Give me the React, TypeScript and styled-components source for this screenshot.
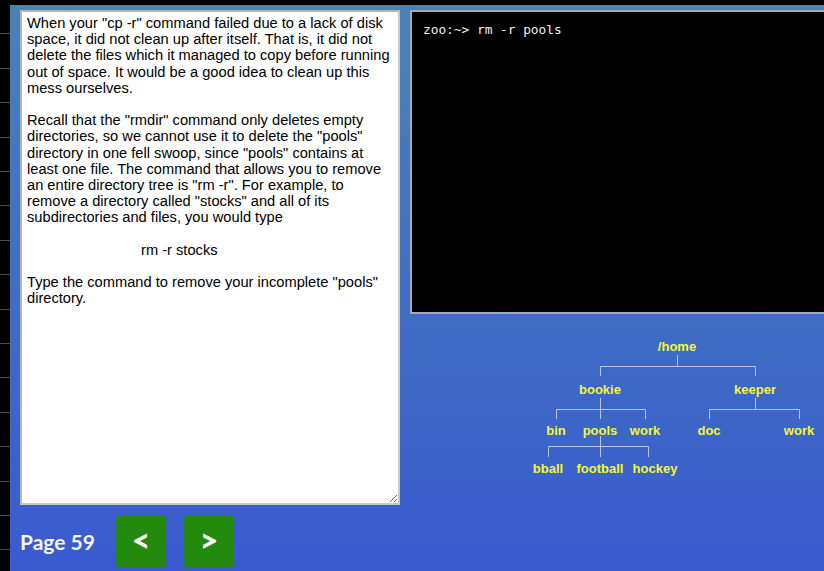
import React from "react";
import styled, { createGlobalStyle } from "styled-components";

const GlobalStyle = createGlobalStyle`
  html, body {
    margin: 0;
    padding: 0;
    background: #000;
    overflow: hidden;
  }
`;

const lessonText =
  'When your "cp -r" command failed due to a lack of disk space, it did not clean up after itself. That is, it did not delete the files which it managed to copy before running out of space. It would be a good idea to clean up this mess ourselves.\n\n' +
  'Recall that the "rmdir" command only deletes empty directories, so we cannot use it to delete the "pools" directory in one fell swoop, since "pools" contains at least one file. The command that allows you to remove an entire directory tree is "rm -r". For example, to remove a directory called "stocks" and all of its subdirectories and files, you would type\n\n' +
  " ".repeat(28) +
  "rm -r stocks\n\n" +
  'Type the command to remove your incomplete "pools" directory.';

type Node = { label: string; x: number; y: number };
type Branch = { from: [number, number]; bar: number; kids: number[]; drop: number };

// tree coords are relative to the diagram's own box
const nodes: Node[] = [
  { label: "/home", x: 267, y: 16 },
  { label: "bookie", x: 190, y: 59 },
  { label: "keeper", x: 345, y: 59 },
  { label: "bin", x: 146, y: 100 },
  { label: "pools", x: 190, y: 100 },
  { label: "work", x: 235, y: 100 },
  { label: "doc", x: 299, y: 100 },
  { label: "work", x: 389, y: 100 },
  { label: "bball", x: 138, y: 138 },
  { label: "football", x: 190, y: 138 },
  { label: "hockey", x: 245, y: 138 },
];

const branches: Branch[] = [
  { from: [267, 27], bar: 38, kids: [190, 345], drop: 48 },
  { from: [190, 70], bar: 81, kids: [146, 190, 235], drop: 91 },
  { from: [345, 70], bar: 81, kids: [299, 389], drop: 91 },
  { from: [190, 108], bar: 118, kids: [138, 190, 238], drop: 129 },
];

export default function App() {
  return (
    <>
      <GlobalStyle />
      <Page>
        <Sidebar />
        <Main>
          <Panel>
            <Workspace>
              <Lesson readOnly value={lessonText} />
              <RightColumn>
                <Terminal>zoo:~&gt; rm -r pools</Terminal>
                <Tree width="414" height="150" viewBox="0 0 414 150">
                  {branches.map((b, i) => (
                    <g key={i} stroke="#b9c3e3" strokeWidth="1" fill="none">
                      <line x1={b.from[0] + 0.5} y1={b.from[1]} x2={b.from[0] + 0.5} y2={b.bar + 0.5} />
                      <line
                        x1={Math.min(...b.kids) + 0.5}
                        y1={b.bar + 0.5}
                        x2={Math.max(...b.kids) + 0.5}
                        y2={b.bar + 0.5}
                      />
                      {b.kids.map((k) => (
                        <line key={k} x1={k + 0.5} y1={b.bar + 0.5} x2={k + 0.5} y2={b.drop} />
                      ))}
                    </g>
                  ))}
                  {nodes.map((n, i) => (
                    <TreeLabel key={i} x={n.x} y={n.y + 7} textAnchor="middle">
                      {n.label}
                    </TreeLabel>
                  ))}
                </Tree>
              </RightColumn>
            </Workspace>
            <Footer>
              <PageLabel>Page 59</PageLabel>
              <NavButton>&lt;</NavButton>
              <NavButton>&gt;</NavButton>
            </Footer>
          </Panel>
        </Main>
      </Page>
    </>
  );
}

const Page = styled.div`
  display: flex;
  min-height: 100vh;
  background: #000;
`;

const Sidebar = styled.div`
  width: 10px;
  flex: none;
  background: repeating-linear-gradient(
    to bottom,
    #000 0px,
    #000 33.4px,
    #4d4d4d 33.4px,
    #4d4d4d 34.4px
  );
`;

const Main = styled.div`
  flex: 1;
  padding-top: 5px;
  display: flex;
`;

const Panel = styled.div`
  flex: 1;
  min-width: 900px;
  padding: 5px 10px;
  background: linear-gradient(to bottom, #4a82b7 0%, #3e6dc3 55%, #3a5ad0 100%);
`;

const Workspace = styled.div`
  display: flex;
  gap: 10px;
  align-items: flex-start;
`;

const Lesson = styled.textarea`
  box-sizing: border-box;
  width: 380px;
  height: 495px;
  margin: 0;
  padding: 3px 5px;
  border: 2px solid #b4b4b4;
  border-right-color: #c8c8c8;
  border-bottom-color: #c8c8c8;
  background: #fff;
  color: #000;
  font-family: "Liberation Sans", Arial, sans-serif;
  font-size: 14.67px;
  line-height: 16.2px;
  resize: both;
  outline: none;
  overflow: hidden;
`;

const RightColumn = styled.div`
  display: flex;
  flex-direction: column;
  gap: 14px;
`;

const Terminal = styled.div`
  box-sizing: border-box;
  width: 440px;
  height: 304px;
  padding: 10px 11px;
  border: 2px solid #a9a9a9;
  background: #000;
  color: #f2f2f2;
  font-family: "DejaVu Sans Mono", "Liberation Mono", monospace;
  font-size: 12.8px;
  line-height: 15px;
  white-space: pre;
`;

const Tree = styled.svg`
  display: block;
`;

const TreeLabel = styled.text`
  fill: #f5f53a;
  font-family: "Liberation Sans", Arial, sans-serif;
  font-weight: bold;
  font-size: 13px;
`;

const Footer = styled.div`
  display: flex;
  align-items: center;
  gap: 18px;
  margin-top: 11px;
`;

const PageLabel = styled.span`
  color: #f4f6fb;
  font-family: Lato, "Open Sans", sans-serif;
  font-weight: bold;
  font-size: 21px;
  margin-right: 3px;
`;

const NavButton = styled.button`
  width: 50px;
  height: 51px;
  border: none;
  border-radius: 2px;
  background: #238a0e;
  color: #fff;
  font-family: Lato, "Open Sans", sans-serif;
  font-weight: 900;
  font-size: 32px;
  padding: 0 0 4px;
  cursor: pointer;
`;
